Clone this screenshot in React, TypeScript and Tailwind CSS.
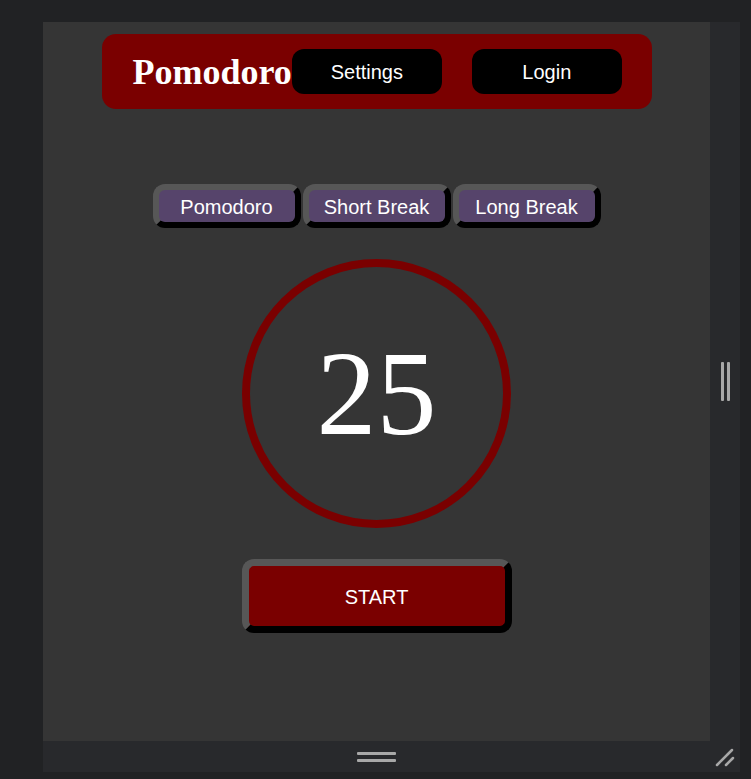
const TABS = ['Pomodoro', 'Short Break', 'Long Break'];

const sans = { fontFamily: '"Liberation Sans", Arial, sans-serif' };

/* ─── Header ────────────────────────────── */
function Header() {
  return (
    <header className="mx-auto mt-[12px] flex h-[75px] w-[550px] items-center justify-between rounded-[14px] bg-[#7a0000] pl-[31px] pr-[30px]">
      <h1 className="font-['Liberation_Serif',serif] text-[36px] font-bold leading-none text-white">
        Pomodoro
      </h1>
      <div className="flex gap-[30px]">
        {['Settings', 'Login'].map((label) => (
          <button
            key={label}
            className="h-[45px] w-[150px] rounded-[12px] bg-black font-['Liberation_Sans',Arial,sans-serif] text-[20px] text-white"
          >
            {label}
          </button>
        ))}
      </div>
    </header>
  );
}

/* ─── Timer ─────────────────────────────── */
function Timer() {
  return (
    <div className="flex flex-col items-center">
      <div className="mt-[75px] flex gap-[2px]" style={sans}>
        {TABS.map((tab) => (
          <button
            key={tab}
            className="h-[44px] w-[148px] rounded-[12px] border-[6px] border-t-[#575757] border-l-[#575757] border-r-black border-b-black bg-[#56446b] pt-[1px] text-[20px] leading-none text-white"
          >
            {tab}
          </button>
        ))}
      </div>

      <div className="mt-[31px] flex h-[269px] w-[269px] items-center justify-center rounded-full border-[8px] border-[#7a0000]">
        <span className="font-['Liberation_Serif',serif] text-[120px] leading-none text-white">
          25
        </span>
      </div>

      <button
        className="mt-[31px] h-[74px] w-[270px] rounded-[12px] border-[7px] border-t-[#575757] border-l-[#575757] border-r-black border-b-black bg-[#7a0000] pt-[1px] text-[20px] text-white"
        style={sans}
      >
        START
      </button>
    </div>
  );
}

/* ─── Frame / resize handles ────────────── */
export default function App() {
  return (
    <div className="h-[779px] w-[751px] overflow-hidden bg-[#212224] pl-[43px] pr-[11px] pt-[22px] pb-[7px]">
      <div className="flex h-full flex-col bg-[#28292c]">
        <div className="flex">
          <main className="h-[719px] w-[667px] bg-[#353535]">
            <Header />
            <Timer />
          </main>
          {/* right gutter */}
          <div className="flex flex-1 items-center justify-center gap-[3px]">
            <span className="h-[39px] w-[3px] rounded-[1px] bg-[#a8a8a8]" />
            <span className="h-[39px] w-[3px] rounded-[1px] bg-[#a8a8a8]" />
          </div>
        </div>
        {/* bottom bar */}
        <div className="flex flex-1">
          <div className="flex w-[667px] flex-col items-center justify-center gap-[4px]">
            <span className="h-[3px] w-[39px] rounded-[1px] bg-[#a8a8a8]" />
            <span className="h-[3px] w-[39px] rounded-[1px] bg-[#a8a8a8]" />
          </div>
          <div className="flex flex-1 items-center justify-center">
            <svg width="20" height="20" viewBox="0 0 20 20" stroke="#a8a8a8" strokeWidth="2.5" strokeLinecap="round">
              <line x1="2" y1="18" x2="17" y2="3" />
              <line x1="11" y1="18" x2="18" y2="11" />
            </svg>
          </div>
        </div>
      </div>
    </div>
  );
}
